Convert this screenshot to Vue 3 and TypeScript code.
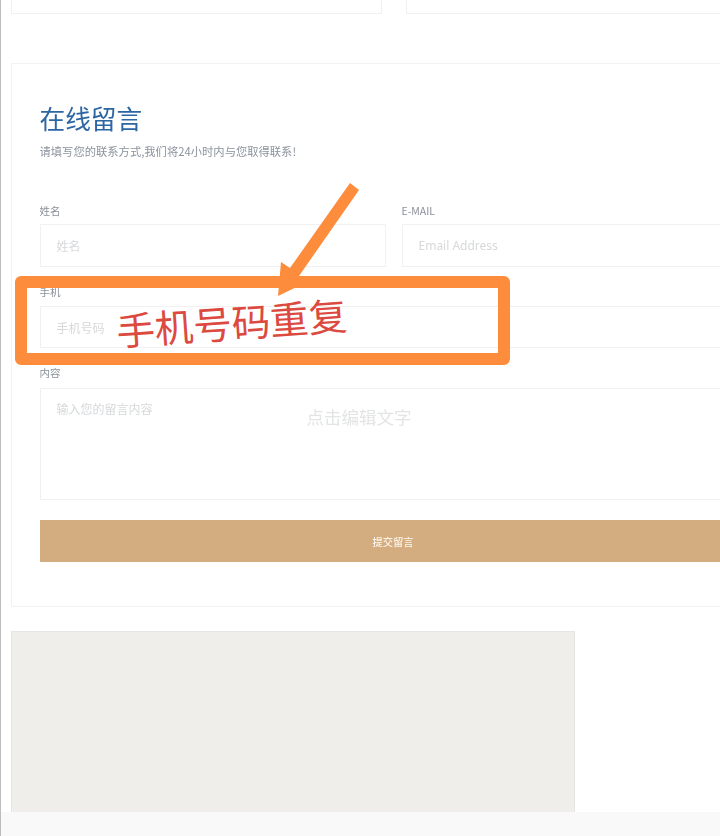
<script setup lang="ts">
const topCards: number[] = [1, 2]
</script>

<template>
  <div class="screen">
    <main class="page">
      <div class="top-row">
        <div v-for="c in topCards" :key="c" class="top-card"></div>
      </div>

      <section class="form-card">
        <h1 class="title">在线留言</h1>
        <p class="subtitle">请填写您的联系方式,我们将24小时内与您取得联系!</p>

        <div class="name-row">
          <div class="field">
            <label class="label">姓名</label>
            <input class="input" placeholder="姓名" />
          </div>
          <div class="field">
            <label class="label">E-MAIL</label>
            <input class="input email" placeholder="Email Address" />
          </div>
        </div>

        <div class="field phone">
          <label class="label">手机</label>
          <input class="input" placeholder="手机号码" />
        </div>

        <div class="field message">
          <label class="label">内容</label>
          <textarea class="textarea" placeholder="输入您的留言内容"></textarea>
        </div>

        <button class="submit" type="button">提交留言</button>
      </section>

      <div class="grey-block"></div>
    </main>
    <div class="bottom-bar"></div>

    <div class="edit-hint">点击编辑文字</div>

    <div class="mark-box"></div>
    <svg class="mark-arrow" width="720" height="320" viewBox="0 0 720 320" aria-hidden="true">
      <polygon points="350,183 359,190 299,276 307,282 278,296 281,262 290,268" fill="#fd8c3c" />
    </svg>
    <div class="mark-text">手机号码重复</div>
  </div>
</template>

<style>
html,
body {
  margin: 0;
  background: #fff;
}
</style>

<style scoped>
.screen {
  position: relative;
  width: 720px;
  height: 836px;
  overflow: hidden;
  background: #fff;
  font-family: "Noto Sans CJK SC", "Noto Sans", sans-serif;
  box-sizing: border-box;
  border-left: 1.5px solid #bdbdbd;
}
.page {
  height: 812px;
  overflow: hidden;
  box-sizing: border-box;
  padding-left: 9.5px;
}
.top-row {
  display: grid;
  grid-template-columns: 371px 371px;
  gap: 24px;
  width: 766px;
  filter: blur(0.4px);
}
.top-card {
  height: 14px;
  box-sizing: border-box;
  border: 1px solid #f1f1f1;
  border-top: 0;
}
.form-card {
  width: 764px;
  height: 544px;
  margin-top: 49px;
  box-sizing: border-box;
  border: 1px solid #f2f2f2;
  padding: 36px 28px 0;
  filter: blur(0.4px);
}
.title {
  margin: 0;
  font-size: 25.7px;
  line-height: 36px;
  font-weight: 400;
  color: #2c66a3;
}
.subtitle {
  margin: 7px 0 45px;
  font-size: 11.3px;
  line-height: 16px;
  color: #8b939c;
}
.name-row {
  display: grid;
  grid-template-columns: 346px 344px;
  gap: 16px;
}
.field {
  display: flex;
  flex-direction: column;
  gap: 6px;
  margin-bottom: 18px;
}
.phone {
  gap: 7px;
}
.phone .input {
  height: 42px;
}
.message {
  gap: 8px;
  margin-bottom: 20px;
}
.label {
  font-size: 10.5px;
  line-height: 14px;
  color: #8a9199;
}
.input,
.textarea {
  display: block;
  width: 100%;
  box-sizing: border-box;
  border: 1px solid #f1f1f1;
  border-radius: 0;
  background: #fff;
  outline: none;
  padding: 0 16px;
  margin: 0;
  font-family: "Noto Sans CJK SC", "Noto Sans", sans-serif;
  font-size: 12px;
  color: #555;
}
.input {
  height: 43px;
}
.email {
  font-family: "Noto Sans", "Noto Sans CJK SC", sans-serif;
  font-size: 12px;
}
.textarea {
  height: 112px;
  padding-top: 11px;
  resize: none;
  line-height: 17px;
}
.input::placeholder,
.textarea::placeholder {
  color: #d6d8da;
  opacity: 1;
}
.submit {
  display: block;
  width: 707px;
  height: 42px;
  margin: 0;
  border: 0;
  border-radius: 0;
  padding: 0;
  background: #d3ac7f;
  color: #fbf4ea;
  font-family: "Noto Sans CJK SC", "Noto Sans", sans-serif;
  font-size: 10.3px;
  font-weight: 500;
}
.grey-block {
  width: 564px;
  height: 181px;
  margin-top: 24px;
  box-sizing: border-box;
  background: #efeeea;
  border: 1px solid #e5e5e1;
  border-bottom: 0;
}
.bottom-bar {
  height: 24px;
  background: #f9f9f9;
}
.edit-hint {
  position: absolute;
  left: 305.5px;
  top: 405px;
  font-size: 17.5px;
  line-height: 24px;
  color: #e3e4e5;
  filter: blur(0.3px);
}
.mark-box {
  position: absolute;
  left: 13.5px;
  top: 276px;
  width: 495px;
  height: 89px;
  box-sizing: border-box;
  border: 12px solid #fd8c3c;
  border-radius: 6px;
}
.mark-arrow {
  position: absolute;
  left: -1.5px;
  top: 0;
}
.mark-text {
  position: absolute;
  left: 114.5px;
  top: 296px;
  font-size: 38.5px;
  line-height: 50px;
  color: #dc4a3f;
  white-space: nowrap;
  transform: rotate(-4deg);
}
</style>
